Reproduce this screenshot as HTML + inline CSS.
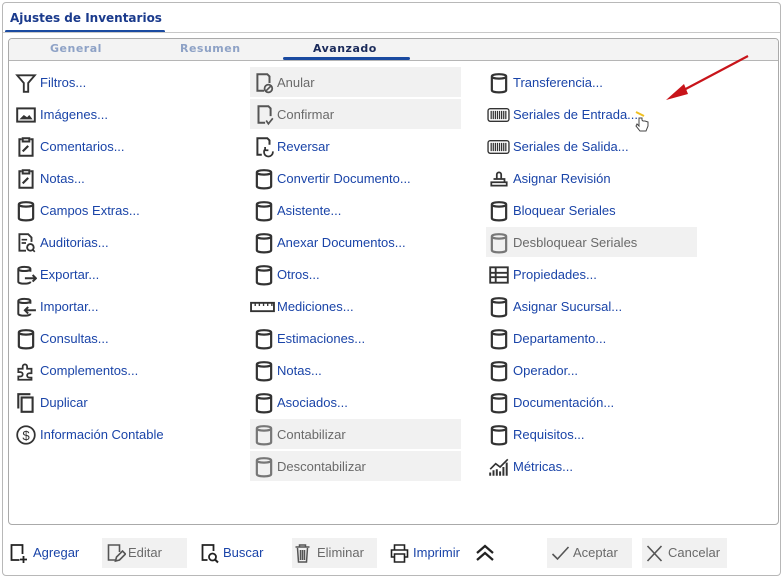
<!DOCTYPE html>
<html><head><meta charset="utf-8"><style>
*{margin:0;padding:0;box-sizing:border-box}
body{width:784px;height:578px;background:#fff;font-family:"Liberation Sans",sans-serif;position:relative;overflow:hidden}
.outer{position:absolute;left:2px;top:2px;width:779px;height:574px;border:1px solid #b8b8b8;border-radius:4px}
.title{position:absolute;left:10px;top:11px;font:bold 12px "DejaVu Sans",sans-serif;color:#1a3a8c}
.tline{position:absolute;left:5px;top:30px;width:160px;height:3px;background:#1a4aa0;border-radius:2px}
.hline{position:absolute;left:3px;top:32px;width:777px;height:1px;background:#c8c8c8}
.inner{position:absolute;left:8px;top:38px;width:771px;height:487px;border:1px solid #aaa;border-radius:4px;overflow:hidden}
.tabs{position:absolute;left:0;top:0;width:100%;height:22px;background:#f3f3f3;border-bottom:1px solid #b5b5b5}
.tab{position:absolute;top:3px;font:bold 11px "DejaVu Sans",sans-serif;color:#8ea2c6;letter-spacing:.5px}
.tab.on{color:#1a2a5a}
.tul{position:absolute;left:274px;top:18px;width:127px;height:3px;background:#1a4aa0;border-radius:2px}
.it{position:absolute;height:30px;font-size:13px;color:#1a44a8;line-height:30px}
.it svg{position:absolute;left:0;top:4px;width:22px;height:22px}
.it span{position:absolute;white-space:nowrap}
.dis{background:#f1f1f1;color:#6a6a6a}
.bb{position:absolute;top:538px;height:30px;font-size:13px;line-height:30px;color:#1a44a8}
.bb.d{background:#f1f1f1;color:#6a6a6a}
.bb svg{position:absolute;top:4px;width:21px;height:22px}
</style></head><body>
<svg width="0" height="0" style="position:absolute">
<defs>
<symbol id="cyl" viewBox="0 0 20 20"><path d="M3.5 4C3.5 1.3 16.5 1.3 16.5 4V16.5c0 2.7-13 2.7-13 0z M3.5 4c0 2.7 13 2.7 13 0" fill="none" stroke="currentColor" stroke-width="2"/></symbol>
<symbol id="bar" viewBox="0 0 22 20"><rect x="1" y="4" width="20" height="12" rx="2" fill="none" stroke="currentColor" stroke-width="1.3"/><path d="M4 6v8M6 6v8M8 6v8M10 6v8M12 6v8M14 6v8M16 6v8M18 6v8" stroke="currentColor" stroke-width="1.2"/></symbol>
<symbol id="clip" viewBox="0 0 20 20"><path d="M6 3H4v15h12V3h-2M7 2h6v3H7z" fill="none" stroke="currentColor" stroke-width="1.8"/><path d="M7 14l5-5" stroke="currentColor" stroke-width="2"/></symbol>
</defs></svg>
<div class="outer"></div>
<div class="title">Ajustes de Inventarios</div>
<div class="tline"></div><div class="hline"></div>
<div class="inner">
<div class="tabs"><div class="tab" style="left:41px">General</div><div class="tab" style="left:171px">Resumen</div><div class="tab on" style="left:304px">Avanzado</div><div class="tul"></div></div>
</div>

<!-- column 1 -->
<div class="it" style="left:15px;top:68px;width:200px"><svg viewBox="0 0 20 20"><path d="M2 3h16l-6 7v8H8v-8z" fill="none" stroke="#333" stroke-width="1.7"/></svg><span style="left:25px">Filtros...</span></div>
<div class="it" style="left:15px;top:100px;width:200px"><svg viewBox="0 0 20 20"><rect x="2" y="4" width="16" height="12" fill="none" stroke="#333" stroke-width="1.8"/><path d="M4 14l4-4 3 2 2-2 3 4z" fill="#333"/></svg><span style="left:25px">Imágenes...</span></div>
<div class="it" style="left:15px;top:132px;width:200px"><svg viewBox="0 0 20 20" style="color:#333"><use href="#clip" width="20" height="20"/></svg><span style="left:25px">Comentarios...</span></div>
<div class="it" style="left:15px;top:164px;width:200px"><svg viewBox="0 0 20 20" style="color:#333"><use href="#clip" width="20" height="20"/></svg><span style="left:25px">Notas...</span></div>
<div class="it" style="left:15px;top:196px;width:200px"><svg viewBox="0 0 20 20" style="color:#333"><use href="#cyl" width="20" height="20"/></svg><span style="left:25px">Campos Extras...</span></div>
<div class="it" style="left:15px;top:228px;width:200px"><svg viewBox="0 0 20 20"><path d="M10 17H4V2h8l3 3v4" fill="none" stroke="#333" stroke-width="1.7"/><circle cx="14" cy="14" r="3" fill="none" stroke="#333" stroke-width="1.7"/><path d="M16 16l2 2M6 7h5M6 10h4" stroke="#333" stroke-width="1.5"/></svg><span style="left:25px">Auditorias...</span></div>
<div class="it" style="left:15px;top:260px;width:200px"><svg viewBox="0 0 20 20"><path d="M3 4.5C3 2 14 2 14 4.5V7M3 4.5V16c0 2.5 11 2.5 11 0M3 4.5c0 2.5 11 2.5 11 0M9 13h10M16 10l3 3-3 3" fill="none" stroke="#333" stroke-width="1.8"/></svg><span style="left:25px">Exportar...</span></div>
<div class="it" style="left:15px;top:292px;width:200px"><svg viewBox="0 0 20 20"><path d="M3 4.5C3 2 14 2 14 4.5V7M3 4.5V16c0 2.5 11 2.5 11 0M3 4.5c0 2.5 11 2.5 11 0M19 13H9M12 10l-3 3 3 3" fill="none" stroke="#333" stroke-width="1.8"/></svg><span style="left:25px">Importar...</span></div>
<div class="it" style="left:15px;top:324px;width:200px"><svg viewBox="0 0 20 20" style="color:#333"><use href="#cyl" width="20" height="20"/></svg><span style="left:25px">Consultas...</span></div>
<div class="it" style="left:15px;top:356px;width:200px"><svg viewBox="0 0 20 20"><path d="M3 8h4V6a2 2 0 014 0v2h4v4h-2a2 2 0 000 4h2v2H3v-3h2a2 2 0 000-4H3z" fill="none" stroke="#333" stroke-width="1.6"/></svg><span style="left:25px">Complementos...</span></div>
<div class="it" style="left:15px;top:388px;width:200px"><svg viewBox="0 0 20 20"><path d="M3 15V2h11" fill="none" stroke="#333" stroke-width="1.9"/><rect x="6" y="5" width="10" height="13" fill="none" stroke="#333" stroke-width="1.9"/></svg><span style="left:25px">Duplicar</span></div>
<div class="it" style="left:15px;top:420px;width:200px"><svg viewBox="0 0 20 20"><circle cx="10" cy="10" r="8" fill="none" stroke="#333" stroke-width="1.6"/><text x="10" y="14.5" font-size="12" text-anchor="middle" fill="#333" font-family="Liberation Sans">$</text></svg><span style="left:25px">Información Contable</span></div>

<!-- column 2 -->
<div class="it dis" style="left:250px;top:67px;width:211px"><svg viewBox="0 0 20 20" style="left:3px;top:5px"><path d="M10 17H4V2h9l2 2v6" fill="none" stroke="#555" stroke-width="1.8"/><circle cx="14" cy="15" r="3.5" fill="none" stroke="#555" stroke-width="1.6"/><path d="M12 17l4-4" stroke="#555" stroke-width="1.5"/></svg><span style="left:27px;top:1px">Anular</span></div>
<div class="it dis" style="left:250px;top:99px;width:211px"><svg viewBox="0 0 20 20" style="left:3px;top:5px"><path d="M11 17H5V2h9l2 2v7" fill="none" stroke="#555" stroke-width="1.8"/><path d="M12 15l2 3 4-5" fill="none" stroke="#555" stroke-width="1.5"/></svg><span style="left:27px;top:1px">Confirmar</span></div>
<div class="it" style="left:250px;top:132px;width:211px"><svg viewBox="0 0 20 20" style="left:3px"><path d="M8 17H4V2h9l2 2v4" fill="none" stroke="#333" stroke-width="1.8"/><path d="M11 12a4 4 0 107 2M11 10v3h3" fill="none" stroke="#333" stroke-width="1.6"/></svg><span style="left:27px">Reversar</span></div>
<div class="it" style="left:250px;top:164px;width:211px"><svg viewBox="0 0 20 20" style="left:3px;color:#333"><use href="#cyl" width="20" height="20"/></svg><span style="left:27px">Convertir Documento...</span></div>
<div class="it" style="left:250px;top:196px;width:211px"><svg viewBox="0 0 20 20" style="left:3px;color:#333"><use href="#cyl" width="20" height="20"/></svg><span style="left:27px">Asistente...</span></div>
<div class="it" style="left:250px;top:228px;width:211px"><svg viewBox="0 0 20 20" style="left:3px;color:#333"><use href="#cyl" width="20" height="20"/></svg><span style="left:27px">Anexar Documentos...</span></div>
<div class="it" style="left:250px;top:260px;width:211px"><svg viewBox="0 0 20 20" style="left:3px;color:#333"><use href="#cyl" width="20" height="20"/></svg><span style="left:27px">Otros...</span></div>
<div class="it" style="left:250px;top:292px;width:211px"><svg viewBox="0 0 24 20" style="left:0;width:25px"><rect x="1" y="6" width="22" height="8" fill="none" stroke="#333" stroke-width="1.8"/><path d="M5 6v3M9 6v3M13 6v3M17 6v3M21 6v3" stroke="#333" stroke-width="1.3"/></svg><span style="left:27px">Mediciones...</span></div>
<div class="it" style="left:250px;top:324px;width:211px"><svg viewBox="0 0 20 20" style="left:3px;color:#333"><use href="#cyl" width="20" height="20"/></svg><span style="left:27px">Estimaciones...</span></div>
<div class="it" style="left:250px;top:356px;width:211px"><svg viewBox="0 0 20 20" style="left:3px;color:#333"><use href="#cyl" width="20" height="20"/></svg><span style="left:27px">Notas...</span></div>
<div class="it" style="left:250px;top:388px;width:211px"><svg viewBox="0 0 20 20" style="left:3px;color:#333"><use href="#cyl" width="20" height="20"/></svg><span style="left:27px">Asociados...</span></div>
<div class="it dis" style="left:250px;top:419px;width:211px"><svg viewBox="0 0 20 20" style="left:3px;top:5px;color:#777"><use href="#cyl" width="20" height="20"/></svg><span style="left:27px;top:1px">Contabilizar</span></div>
<div class="it dis" style="left:250px;top:451px;width:211px"><svg viewBox="0 0 20 20" style="left:3px;top:5px;color:#777"><use href="#cyl" width="20" height="20"/></svg><span style="left:27px;top:1px">Descontabilizar</span></div>

<!-- column 3 -->
<div class="it" style="left:486px;top:68px;width:211px"><svg viewBox="0 0 20 20" style="left:2px;color:#333"><use href="#cyl" width="20" height="20"/></svg><span style="left:27px">Transferencia...</span></div>
<div class="it" style="left:486px;top:100px;width:211px"><svg viewBox="0 0 22 20" style="left:1px;width:23px;color:#333"><use href="#bar" width="22" height="20"/></svg><span style="left:27px">Seriales de Entrada...</span></div>
<div class="it" style="left:486px;top:132px;width:211px"><svg viewBox="0 0 22 20" style="left:1px;width:23px;color:#333"><use href="#bar" width="22" height="20"/></svg><span style="left:27px">Seriales de Salida...</span></div>
<div class="it" style="left:486px;top:164px;width:211px"><svg viewBox="0 0 20 20" style="left:2px"><path d="M8 10V6a2 2 0 114 0v4M3 13h14v3H3zM5 10h10v3" fill="none" stroke="#333" stroke-width="1.6"/></svg><span style="left:27px">Asignar Revisión</span></div>
<div class="it" style="left:486px;top:196px;width:211px"><svg viewBox="0 0 20 20" style="left:2px;color:#333"><use href="#cyl" width="20" height="20"/></svg><span style="left:27px">Bloquear Seriales</span></div>
<div class="it dis" style="left:486px;top:227px;width:211px"><svg viewBox="0 0 20 20" style="left:2px;top:5px;color:#777"><use href="#cyl" width="20" height="20"/></svg><span style="left:27px;top:1px">Desbloquear Seriales</span></div>
<div class="it" style="left:486px;top:260px;width:211px"><svg viewBox="0 0 20 20" style="left:2px"><path d="M2 3h16v14H2zM2 8h16M2 12h16M7 3v14" fill="none" stroke="#333" stroke-width="1.7"/></svg><span style="left:27px">Propiedades...</span></div>
<div class="it" style="left:486px;top:292px;width:211px"><svg viewBox="0 0 20 20" style="left:2px;color:#333"><use href="#cyl" width="20" height="20"/></svg><span style="left:27px">Asignar Sucursal...</span></div>
<div class="it" style="left:486px;top:324px;width:211px"><svg viewBox="0 0 20 20" style="left:2px;color:#333"><use href="#cyl" width="20" height="20"/></svg><span style="left:27px">Departamento...</span></div>
<div class="it" style="left:486px;top:356px;width:211px"><svg viewBox="0 0 20 20" style="left:2px;color:#333"><use href="#cyl" width="20" height="20"/></svg><span style="left:27px">Operador...</span></div>
<div class="it" style="left:486px;top:388px;width:211px"><svg viewBox="0 0 20 20" style="left:2px;color:#333"><use href="#cyl" width="20" height="20"/></svg><span style="left:27px">Documentación...</span></div>
<div class="it" style="left:486px;top:420px;width:211px"><svg viewBox="0 0 20 20" style="left:2px;color:#333"><use href="#cyl" width="20" height="20"/></svg><span style="left:27px">Requisitos...</span></div>
<div class="it" style="left:486px;top:452px;width:211px"><svg viewBox="0 0 20 20" style="left:2px"><path d="M2 18v-3M5 18v-5M8 18v-6M11 18v-4M14 18v-8M17 18v-12" stroke="#333" stroke-width="1.8"/><path d="M2 12l5-5 4 3 7-7" fill="none" stroke="#333" stroke-width="1.5"/></svg><span style="left:27px">Métricas...</span></div>

<!-- arrow + cursor -->
<svg style="position:absolute;left:660px;top:52px" width="95" height="60"><path d="M88 4L20 40" stroke="#c8141a" stroke-width="2.2"/><path d="M6 48L24 32l4 10z" fill="#c8141a"/></svg>
<svg style="position:absolute;left:632px;top:110px" width="20" height="24"><path d="M4 2l8 4" stroke="#f0c020" stroke-width="2"/><path d="M7 8v8l-2-2-1 2 4 5h6l2-5v-4l-3-1-2 0-1-1V8z" fill="#fff" stroke="#444"/></svg>

<!-- bottom bar -->
<div class="bb" style="left:8px;width:80px"><svg viewBox="0 0 20 22" style="left:0"><path d="M11 18H3V3h11v9M15 14v7M11.5 17.5h7" fill="none" stroke="#222" stroke-width="1.8"/></svg><span style="position:absolute;left:25px">Agregar</span></div>
<div class="bb d" style="left:102px;width:85px"><svg viewBox="0 0 20 22" style="left:3px"><path d="M10 18H3V3h11v7M10 19l1-4 6-6 3 3-6 6z" fill="none" stroke="#555" stroke-width="1.6"/></svg><span style="position:absolute;left:26px">Editar</span></div>
<div class="bb" style="left:198px;width:80px"><svg viewBox="0 0 20 22" style="left:1px"><path d="M8 18H3V3h11v6" fill="none" stroke="#222" stroke-width="1.8"/><circle cx="13" cy="15" r="3.5" fill="none" stroke="#222" stroke-width="1.8"/><path d="M15.5 17.5l3 3" stroke="#222" stroke-width="2"/></svg><span style="position:absolute;left:25px">Buscar</span></div>
<div class="bb d" style="left:292px;width:85px"><svg viewBox="0 0 20 22" style="left:0"><path d="M3 5h14M7 5V3h6v2M5 6l1 14h8l1-14M8 8v10M10 8v10M12 8v10" fill="none" stroke="#555" stroke-width="1.5"/></svg><span style="position:absolute;left:25px">Eliminar</span></div>
<div class="bb" style="left:388px;width:80px"><svg viewBox="0 0 20 22" style="left:1px"><path d="M5 8V3h10v5M5 15H2V8h16v7h-3M5 12h10v8H5z" fill="none" stroke="#222" stroke-width="1.6"/></svg><span style="position:absolute;left:25px">Imprimir</span></div>
<svg style="position:absolute;left:474px;top:543px" width="22" height="20" viewBox="0 0 22 20"><path d="M3 10l8-7 8 7M3 17l8-7 8 7" fill="none" stroke="#222" stroke-width="2.2"/></svg>
<div class="bb d" style="left:547px;width:85px"><svg viewBox="0 0 20 22" style="left:3px"><path d="M2 12l5 5L18 5" fill="none" stroke="#555" stroke-width="1.6"/></svg><span style="position:absolute;left:26px">Aceptar</span></div>
<div class="bb d" style="left:642px;width:85px"><svg viewBox="0 0 20 22" style="left:2px"><path d="M3 4l14 15M17 4L3 19" fill="none" stroke="#555" stroke-width="1.6"/></svg><span style="position:absolute;left:26px">Cancelar</span></div>
</body></html>
